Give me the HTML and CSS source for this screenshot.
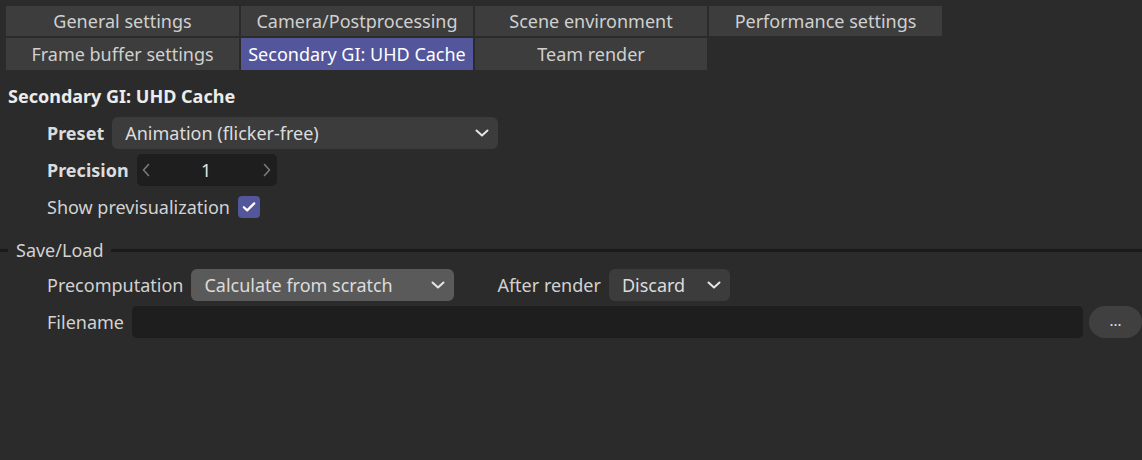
FILE: index.html
```html
<!DOCTYPE html>
<html>
<head>
<meta charset="utf-8">
<link rel="stylesheet" href="styles.css">
</head>
<body>
<div class="app">
  <div class="tabs">
    <div class="tab">General settings</div>
    <div class="tab">Camera/Postprocessing</div>
    <div class="tab">Scene environment</div>
    <div class="tab">Performance settings</div>
    <div class="tab">Frame buffer settings</div>
    <div class="tab active">Secondary GI: UHD Cache</div>
    <div class="tab">Team render</div>
  </div>

  <div class="heading">Secondary GI: UHD Cache</div>

  <div class="group top">
    <div class="row">
      <span class="label bold">Preset</span>
      <div class="select preset">
        <span>Animation (flicker-free)</span>
        <svg class="chev" viewBox="0 0 14 8" width="14" height="8"><path d="M1.5 1.5 L7 6.5 L12.5 1.5" fill="none" stroke="#e6e6e6" stroke-width="2" stroke-linecap="round" stroke-linejoin="round"/></svg>
      </div>
    </div>
    <div class="row">
      <span class="label bold">Precision</span>
      <div class="spinner">
        <svg viewBox="0 0 8 14" width="8" height="14"><path d="M6.5 1.5 L1.5 7 L6.5 12.5" fill="none" stroke="#7a7a7a" stroke-width="1.6" stroke-linecap="round" stroke-linejoin="round"/></svg>
        <span class="num">1</span>
        <svg viewBox="0 0 8 14" width="8" height="14"><path d="M1.5 1.5 L6.5 7 L1.5 12.5" fill="none" stroke="#7a7a7a" stroke-width="1.6" stroke-linecap="round" stroke-linejoin="round"/></svg>
      </div>
    </div>
    <div class="row">
      <span class="label">Show previsualization</span>
      <div class="check">
        <svg viewBox="0 0 14 12" width="14" height="12"><path d="M1.8 6.2 L5.2 9.4 L12.2 2.4" fill="none" stroke="#ffffff" stroke-width="2.2" stroke-linecap="round" stroke-linejoin="round"/></svg>
      </div>
    </div>
  </div>

  <div class="section">
    <span class="stub"></span>
    <span class="section-title">Save/Load</span>
    <span class="rule"></span>
  </div>

  <div class="group">
    <div class="row">
      <span class="label">Precomputation</span>
      <div class="select light calc">
        <span>Calculate from scratch</span>
        <svg class="chev" viewBox="0 0 14 8" width="14" height="8"><path d="M1.5 1.5 L7 6.5 L12.5 1.5" fill="none" stroke="#e6e6e6" stroke-width="2" stroke-linecap="round" stroke-linejoin="round"/></svg>
      </div>
      <span class="label after">After render</span>
      <div class="select discard">
        <span>Discard</span>
        <svg class="chev" viewBox="0 0 14 8" width="14" height="8"><path d="M1.5 1.5 L7 6.5 L12.5 1.5" fill="none" stroke="#e6e6e6" stroke-width="2" stroke-linecap="round" stroke-linejoin="round"/></svg>
      </div>
    </div>
    <div class="row">
      <span class="label">Filename</span>
      <div class="input"></div>
      <div class="dots">...</div>
    </div>
  </div>
</div>
</body>
</html>
```
FILE: styles.css
```css
html, body {
  margin: 0;
  padding: 0;
  background: #2b2b2b;
}
body {
  width: 1142px;
  height: 460px;
  overflow: hidden;
  font-family: "Noto Sans", "Open Sans", sans-serif;
  font-size: 18px;
  color: #d4d4d4;
}
.app {
  padding: 6px 0 0 0;
}
.tabs {
  display: grid;
  grid-template-columns: 233px 232px 232px 233px;
  grid-template-rows: 30px 32px;
  column-gap: 2px;
  row-gap: 2px;
  padding-left: 6px;
}
.tab {
  background: #3d3d3d;
  display: flex;
  align-items: center;
  justify-content: center;
  color: #d0d0d0;
  white-space: nowrap;
}
.tab.active {
  background: #53569a;
  color: #ffffff;
}
.heading {
  font-weight: bold;
  color: #ececec;
  margin: 12px 0 0 8px;
  height: 28px;
  line-height: 28px;
}
.group {
  padding-left: 47px;
  display: flex;
  flex-direction: column;
  gap: 5px;
}
.group.top {
  margin-top: 7px;
}
.row {
  display: flex;
  align-items: center;
  height: 32px;
}
.label {
  color: #d2d2d2;
  white-space: nowrap;
}
.bold {
  font-weight: bold;
  color: #dcdcdc;
}
.select {
  height: 32px;
  background: #3c3c3c;
  border-radius: 6px;
  display: flex;
  align-items: center;
  justify-content: space-between;
  padding: 0 9px 0 13px;
  box-sizing: border-box;
  color: #dcdcdc;
  flex-shrink: 0;
}
.select.light {
  background: #5a5a5a;
}
.preset { width: 386px; margin-left: 8px; }
.calc { width: 263px; margin-left: 8px; }
.discard { width: 121px; margin-left: 8px; }
.after { margin-left: 43px; }
.spinner {
  margin-left: 8px;
  width: 140px;
  height: 32px;
  background: #1e1e1e;
  border-radius: 5px;
  display: flex;
  align-items: center;
  justify-content: space-between;
  padding: 0 6px 0 5px;
  box-sizing: border-box;
}
.spinner .num { color: #e0e0e0; }
.check {
  margin-left: 8px;
  width: 22px;
  height: 22px;
  background: #53569a;
  border-radius: 4px;
  display: flex;
  align-items: center;
  justify-content: center;
}
.section {
  display: flex;
  align-items: center;
  margin-top: 16px;
  height: 22px;
  margin-bottom: 8px;
}
.stub {
  width: 8px;
  height: 3px;
  background: #1a1a1a;
}
.section-title {
  color: #d2d2d2;
  padding: 0 8px;
}
.rule {
  flex: 1;
  height: 3px;
  background: #1a1a1a;
}
.input {
  margin-left: 8px;
  flex: 1;
  height: 32px;
  background: #1e1e1e;
  border-radius: 5px;
}
.dots {
  margin-left: 6px;
  width: 53px;
  height: 32px;
  background: #404040;
  border-radius: 16px;
  display: flex;
  align-items: center;
  justify-content: center;
  color: #e0e0e0;
  flex-shrink: 0;
  line-height: 1;
  padding-bottom: 4px;
  box-sizing: border-box;
  font-size: 15px;
}
```
